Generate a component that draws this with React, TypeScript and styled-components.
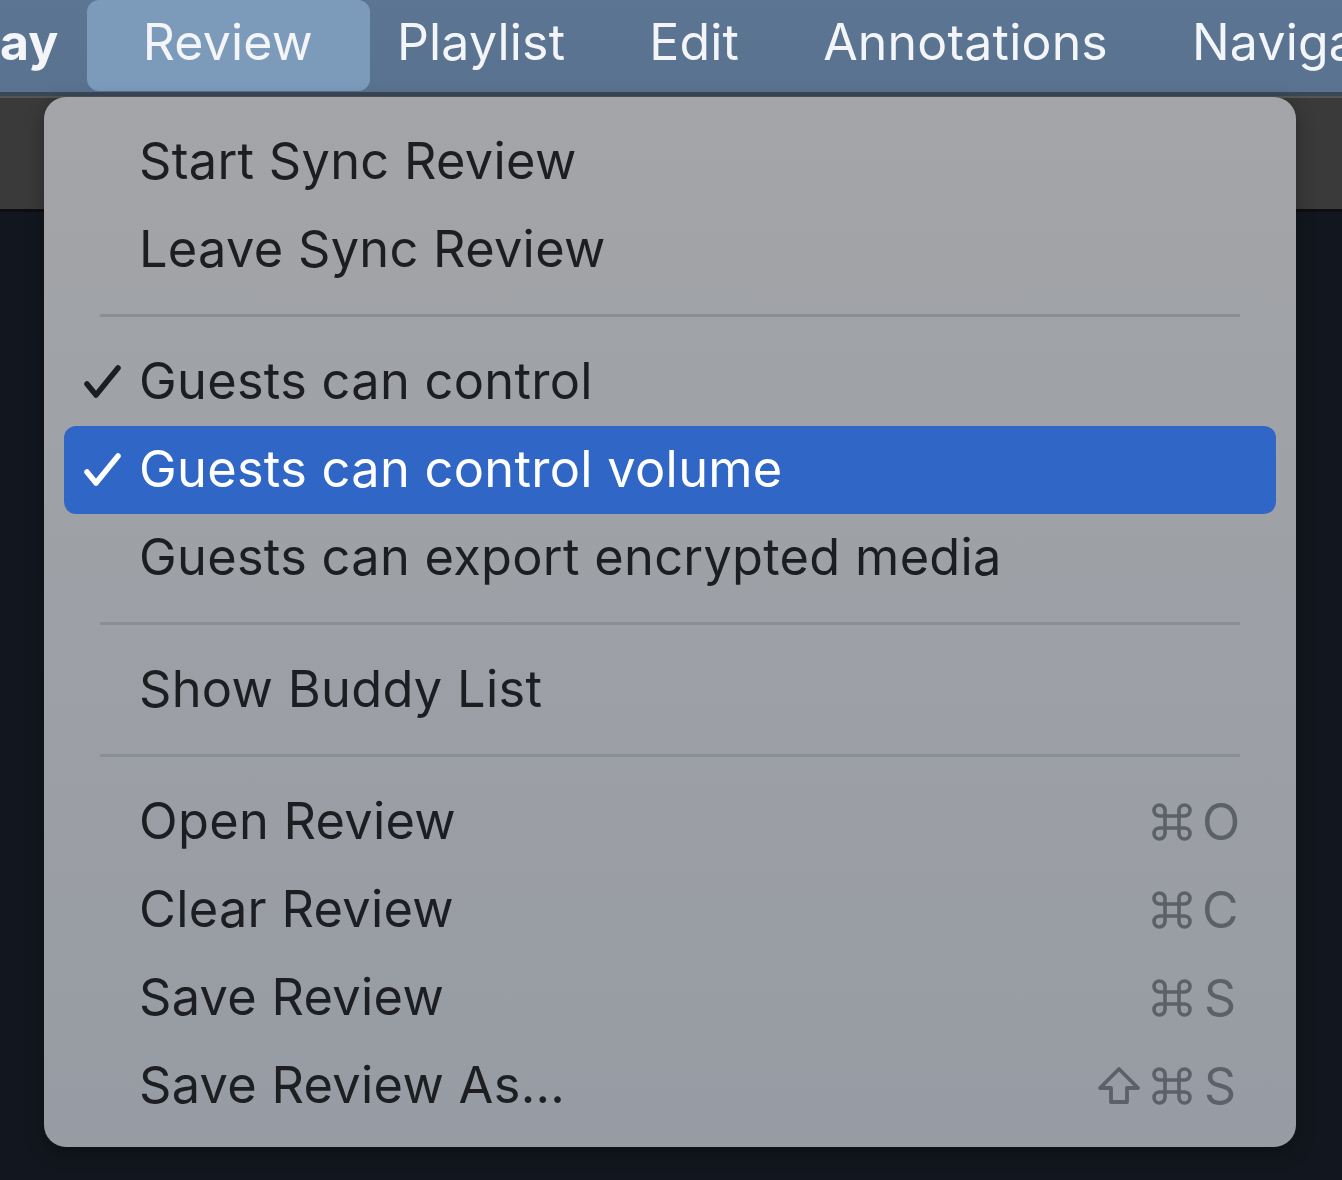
import styled, { createGlobalStyle } from 'styled-components';

const GlobalStyle = createGlobalStyle`
  html, body {
    margin: 0;
    padding: 0;
    background: #12171f;
  }
  body {
    font-family: Inter, "Noto Sans", "Liberation Sans", sans-serif;
  }
`;

const Page = styled.div`
  position: relative;
  width: 1342px;
  height: 1180px;
  overflow: hidden;
  display: flex;
  flex-direction: column;
  background: #12171f;
`;

// Top menu bar
const MenuBar = styled.div`
  height: 96px;
  flex-shrink: 0;
  display: flex;
  align-items: stretch;
  gap: 84px;
  padding-left: 0;
  box-sizing: border-box;
  background: linear-gradient(#5b7593, #58728f);
  border-bottom: 4px solid #3a4757;
  white-space: nowrap;
  overflow: hidden;
`;

const BarItem = styled.div<{ $active?: boolean; $bold?: boolean }>`
  position: relative;
  display: flex;
  align-items: center;
  padding-bottom: 8px;
  font-size: 50px;
  font-weight: ${({ $bold }) => ($bold ? 700 : 400)};
  color: #f3f5f8;
  letter-spacing: 0.2px;
  z-index: 0;

  &::before {
    content: '';
    display: ${({ $active }) => ($active ? 'block' : 'none')};
    position: absolute;
    z-index: -1;
    top: 0;
    bottom: 1px;
    left: -56px;
    right: -57px;
    border-radius: 12px;
    background: #7c9aba;
  }
`;

// Background of the app under the menu
const ToolStrip = styled.div`
  height: 116px;
  flex-shrink: 0;
  background: #3a3a3a;
  border-top: 2px solid #555;
  border-bottom: 3px solid #0c0e12;
  box-sizing: border-box;
`;

const Viewer = styled.div`
  flex: 1;
  background: #12171f;
`;

// Dropdown
const Dropdown = styled.div`
  position: absolute;
  top: 97px;
  left: 44px;
  width: 1252px;
  box-sizing: border-box;
  padding: 21px 20px 17px;
  border-radius: 22px;
  background: linear-gradient(#a3a5a8, #979ba3);
  box-shadow: 0 6px 18px rgba(0, 0, 0, 0.35);
`;

const Row = styled.div<{ $selected?: boolean }>`
  height: 88px;
  display: grid;
  grid-template-columns: 77px 1fr auto;
  align-items: center;
  padding-right: 38px;
  border-radius: 12px;
  background: ${({ $selected }) => ($selected ? '#3067c6' : 'transparent')};
  color: ${({ $selected }) => ($selected ? '#ffffff' : '#1c1e21')};
`;

const CheckCell = styled.div`
  display: flex;
  align-items: center;
  padding-left: 18px;
`;

const Label = styled.span`
  font-size: 50.5px;
  letter-spacing: 0.3px;
  white-space: nowrap;
  line-height: 1;
  margin-left: -2px;
  padding-bottom: 2px;
`;

const Shortcut = styled.span`
  display: flex;
  align-items: center;
  gap: 10px;
  font-size: 50px;
  color: #5c6068;
  line-height: 1;
`;

const KeyLetter = styled.span`
  width: 36px;
  text-align: center;
`;

const Separator = styled.div`
  height: 44px;
  display: flex;
  align-items: center;
  padding: 0 36px;
  &::after {
    content: '';
    flex: 1;
    height: 3px;
    margin-bottom: 2px;
    background: #8a8e95;
  }
`;

const Check = () => (
  <svg width="40" height="34" viewBox="0 0 40 34">
    <polyline
      points="5,19 14,30 36,3"
      fill="none"
      stroke="currentColor"
      strokeWidth="5.5"
      strokeLinecap="round"
      strokeLinejoin="round"
    />
  </svg>
);

const Cmd = () => (
  <svg width="40" height="38" viewBox="0 0 40 38" fill="none" stroke="currentColor" strokeWidth="3.6">
    <path d="M13 13 V7.5 A5.5 5.5 0 1 0 7.5 13 H32.5 A5.5 5.5 0 1 0 27 7.5 V30.5 A5.5 5.5 0 1 0 32.5 25 H7.5 A5.5 5.5 0 1 0 13 30.5 Z" />
  </svg>
);

const Shift = () => (
  <svg width="46" height="40" viewBox="0 0 46 40" fill="none" stroke="currentColor" strokeWidth="3.8" strokeLinejoin="round">
    <path d="M23 3 L42 22 H31 V36 H15 V22 H4 Z" />
  </svg>
);

type Item =
  | { kind: 'sep' }
  | { kind: 'item'; label: string; checked?: boolean; selected?: boolean; keys?: { shift?: boolean; key: string } };

const items: Item[] = [
  { kind: 'item', label: 'Start Sync Review' },
  { kind: 'item', label: 'Leave Sync Review' },
  { kind: 'sep' },
  { kind: 'item', label: 'Guests can control', checked: true },
  { kind: 'item', label: 'Guests can control volume', checked: true, selected: true },
  { kind: 'item', label: 'Guests can export encrypted media' },
  { kind: 'sep' },
  { kind: 'item', label: 'Show Buddy List' },
  { kind: 'sep' },
  { kind: 'item', label: 'Open Review', keys: { key: 'O' } },
  { kind: 'item', label: 'Clear Review', keys: { key: 'C' } },
  { kind: 'item', label: 'Save Review', keys: { key: 'S' } },
  { kind: 'item', label: 'Save Review As...', keys: { shift: true, key: 'S' } },
];

const menus = ['Review', 'Playlist', 'Edit', 'Annotations', 'Naviga'];

export default function App() {
  return (
    <>
      <GlobalStyle />
      <Page>
        <MenuBar>
          <BarItem $bold>ay</BarItem>
          {menus.map((m) => (
            <BarItem key={m} $active={m === 'Review'}>
              {m}
            </BarItem>
          ))}
        </MenuBar>
        <ToolStrip />
        <Viewer />

        <Dropdown>
          {items.map((it, i) =>
            it.kind === 'sep' ? (
              <Separator key={i} />
            ) : (
              <Row key={i} $selected={it.selected}>
                <CheckCell>{it.checked && <Check />}</CheckCell>
                <Label>{it.label}</Label>
                {it.keys ? (
                  <Shortcut>
                    {it.keys.shift && <Shift />}
                    <Cmd />
                    <KeyLetter>{it.keys.key}</KeyLetter>
                  </Shortcut>
                ) : (
                  <span />
                )}
              </Row>
            )
          )}
        </Dropdown>
      </Page>
    </>
  );
}
